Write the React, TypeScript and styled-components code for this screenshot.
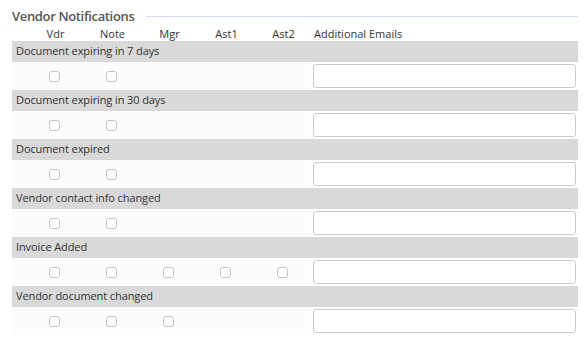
import React from "react";
import styled, { createGlobalStyle } from "styled-components";

const Global = createGlobalStyle`
  html, body { margin: 0; padding: 0; background: #ffffff; }
  body { font-family: "Open Sans", "Noto Sans", sans-serif; }
`;

const Panel = styled.div`
  width: 566px;
  padding: 6px 8px 0 12px;
`;

const Legend = styled.div`
  display: flex;
  align-items: center;
  gap: 12px;
  height: 20px;
`;

const Title = styled.span`
  font-size: 13px;
  font-weight: 600;
  color: #555555;
  letter-spacing: -0.35px;
`;

const Rule = styled.div`
  flex: 1;
  height: 1px;
  background: #d4def6;
`;

const Grid = styled.div`
  display: grid;
  grid-template-columns: 14px repeat(5, 57px) 1fr;
  margin-left: 1px;
`;

const HeaderCell = styled.div<{ $left?: boolean }>`
  font-size: 11px;
  color: #333333;
  height: 15px;
  line-height: 16px;
  text-align: ${(p) => (p.$left ? "left" : "center")};
  padding-left: ${(p) => (p.$left ? "2px" : "0")};
`;

const Spacer = styled.div``;

const Group = styled.div`
  display: flex;
  flex-direction: column;
`;

const Bar = styled.div`
  height: 21px;
  line-height: 20px;
  background: #d9d9d9;
  font-size: 11px;
  color: #333333;
  padding-left: 4px;
  letter-spacing: -0.1px;
`;

const Row = styled.div`
  display: grid;
  grid-template-columns: 14px repeat(5, 57px) 1fr;
  height: 28px;
  align-items: center;
  background: #fcfcfc;
`;

const CheckCell = styled.div`
  display: flex;
  justify-content: center;
`;

const Box = styled.span`
  width: 9px;
  height: 9px;
  border: 1px solid #c4c4c4;
  border-radius: 3px;
  background: #ffffff;
`;

const InputCell = styled.div`
  padding-left: 2px;
  background: #ffffff;
  height: 28px;
  display: flex;
  align-items: center;
`;

const EmailInput = styled.input`
  box-sizing: border-box;
  width: 263px;
  height: 24px;
  border: 1px solid #cbcbcb;
  border-radius: 3px;
  background: #ffffff;
  outline: none;
  font-size: 11px;
  padding: 0 4px;
`;

const rows: { label: string; boxes: number }[] = [
  { label: "Document expiring in 7 days", boxes: 2 },
  { label: "Document expiring in 30 days", boxes: 2 },
  { label: "Document expired", boxes: 2 },
  { label: "Vendor contact info changed", boxes: 2 },
  { label: "Invoice Added", boxes: 5 },
  { label: "Vendor document changed", boxes: 3 },
];

const headers = ["Vdr", "Note", "Mgr", "Ast1", "Ast2"];

export default function App() {
  return (
    <>
      <Global />
      <Panel>
        <Legend>
          <Title>Vendor Notifications</Title>
          <Rule />
        </Legend>
        <Grid>
          <Spacer />
          {headers.map((h) => (
            <HeaderCell key={h}>{h}</HeaderCell>
          ))}
          <HeaderCell $left>Additional Emails</HeaderCell>
        </Grid>
        {rows.map((r) => (
          <Group key={r.label}>
            <Bar>{r.label}</Bar>
            <Row>
              <Spacer />
              {headers.map((h, i) => (
                <CheckCell key={h}>{i < r.boxes ? <Box /> : null}</CheckCell>
              ))}
              <InputCell>
                <EmailInput type="text" />
              </InputCell>
            </Row>
          </Group>
        ))}
      </Panel>
    </>
  );
}
